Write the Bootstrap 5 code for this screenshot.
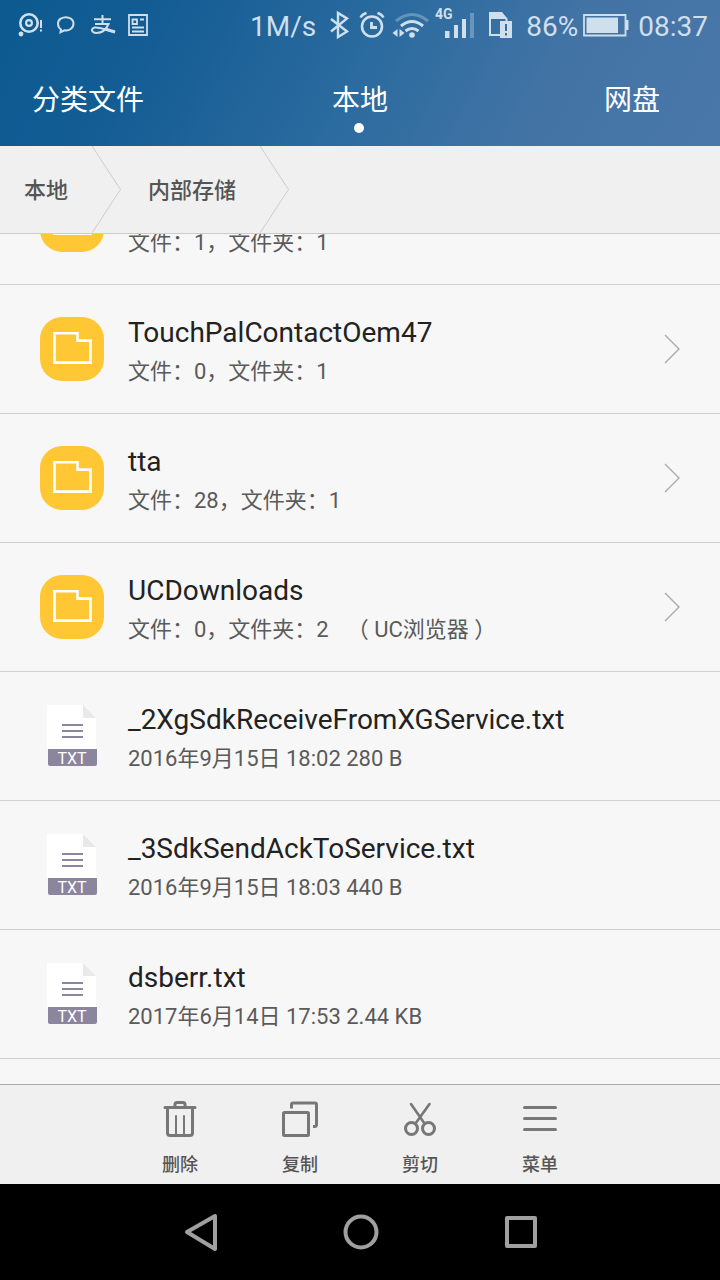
<!DOCTYPE html>
<html lang="zh-CN">
<head>
<meta charset="utf-8">
<meta name="viewport" content="width=device-width, initial-scale=1">
<title>文件管理</title>
<link href="https://cdn.jsdelivr.net/npm/bootstrap@5.3.0/dist/css/bootstrap.min.css" rel="stylesheet">
<style>
  body { font-family: Roboto, "Noto Sans CJK SC", sans-serif; background: #f7f7f7; color: #222; }
  svg { display: block; flex: none; }
  a, button { color: inherit; text-decoration: none; }

  .top-area { background: linear-gradient(118deg, #0c5a90 0%, #135c94 20%, #2b6b9f 50%, #4273a5 74%, #4a77a9 100%); color: #fff; }
  .status-bar { height: 50px; padding: 0 12px 0 14px; font-size: 28px; line-height: 54px; color: #cfdfec; }
  .status-bar svg { height: 50px; fill: none; stroke: #cfdfec; stroke-width: 2; }
  .status-bar .solid { fill: #cfdfec; stroke: none; }
  .status-bar .faint { opacity: .35; }

  .tabs { height: 96px; font-size: 28px; line-height: 44px; }
  .tabs a { padding: 6px 32px 0; position: relative; }
  .tabs .to-right { padding-right: 60px; }
  .tabs .current::after { content: ""; position: absolute; left: 50%; top: 50px; width: 10px; height: 10px; margin-left: -6px; border-radius: 50%; background: #fff; }

  .crumbs { height: 88px; padding-left: 24px; background: #f0f0f0; border-bottom: 1px solid #ccc; font-size: 22px; font-weight: 500; color: #555; }
  .crumbs a { padding-top: 2px; }
  .crumbs svg { margin: 0 27px 0 24px; fill: none; stroke: #ccc; }

  .file-list { min-height: 0; padding-bottom: 25px; scrollbar-width: none; }
  .file-list::-webkit-scrollbar { display: none; }
  .file-row { height: 129px; padding: 0 40px; gap: 24px; border-bottom: 1px solid #d0d0d0; }
  .file-icon { width: 64px; height: 64px; }
  .folder { border-radius: 22px; background: #ffc734; }
  .file-text { padding-top: 6px; }
  .file-name { font-size: 28px; line-height: 40px; color: #222; }
  .file-meta { font-size: 22px; line-height: 38px; color: #5a5a5a; }
  .app-note { margin-left: 18px; }

  .tool-bar { height: 100px; background: #f0f0f0; border-top: 1px solid #aaa; }
  .tool-bar button { width: 120px; padding: 5px 0 0; border: 0; background: none; font-size: 18px; line-height: 20px; font-weight: 500; color: #555; gap: 16px; }
  .tool-bar svg { fill: none; stroke: #777; stroke-width: 3; stroke-linecap: round; stroke-linejoin: round; }

  .nav-keys { height: 96px; background: #000; }
  .nav-keys button { width: 160px; padding: 0; border: 0; background: none; }
  .nav-keys svg { fill: none; stroke: #a0a0a0; stroke-width: 4; stroke-linejoin: round; }
</style>
</head>
<body>
<svg width="0" height="0" class="position-absolute" aria-hidden="true">
  <symbol id="folder" viewBox="0 0 64 64">
    <path d="M14.500 16.300h23v7.300h13v22h-36z" fill="none" stroke="#fff" stroke-width="2.600"/>
  </symbol>
  <symbol id="page" viewBox="0 0 50 62">
    <path d="M0 0h36l13 13v31H0z" fill="#fff"/>
    <path d="M36 0l13 13H36z" fill="#e9e9e9"/>
    <path d="M15 20h21M15 26h21M15 32h21" stroke="#8c859e" stroke-width="2"/>
    <path d="M1 44h49v15q0 2-2 2H3q-2 0-2-2z" fill="#8c859e"/>
  </symbol>
  <symbol id="arrow" viewBox="0 0 16 30">
    <path d="M1 1l14 14L1 29" fill="none" stroke="#aaa" stroke-width="1.400"/>
  </symbol>
</svg>

<div class="d-flex flex-column vh-100 overflow-hidden">
  <header class="top-area flex-shrink-0">
    <div class="status-bar d-flex">
      <svg width="34" viewBox="14 0 34 50"><circle cx="29" cy="23" r="8.700" stroke-width="2.600"/><circle cx="29" cy="23" r="2.900" stroke-width="2.200"/><circle class="solid" cx="21" cy="34" r="2.400"/><path d="M41 20v8M41 29.500v2"/></svg>
      <svg width="36" viewBox="48 0 36 50"><path d="M61 29.500C57 27 57 20.500 61 18.500C66 15.500 73.500 18 73.500 23.500C73.500 28.500 69 31 64.500 30.300L60.500 32.200z"/></svg>
      <svg width="36" viewBox="84 0 36 50"><path d="M94 19.200h17M102.500 15v9M95 24h13.500C106 30 101 33 96.500 33C91 33 90.500 28 95 27.500C100 27 106 30 115 32"/><path d="M105 29l10 3" stroke-width="3"/></svg>
      <svg width="36" viewBox="120 0 36 50"><path d="M129 15h18v20h-18zM132.500 19.500h4.500v4.500h-4.500zM140 19.500h4M132 27.500h12M132 31.500h12" stroke-width="1.800"/></svg>
      <span class="ms-auto">1M/s</span>
      <svg width="38" viewBox="316 0 38 50"><path d="M331 19l16 12.500l-9 5.500V13l9 5.500L331 31.500" stroke-width="2.400"/></svg>
      <svg width="34" viewBox="354 0 34 50"><circle cx="372" cy="26.500" r="10" stroke-width="2.600"/><path d="M371.500 22v5.500h5.500" stroke-width="2.800"/><path d="M360.500 17.500q2-3.500 6-4.500M383.500 17.500q-2-3.500-6-4.500" stroke-width="2.400"/></svg>
      <svg width="44" viewBox="388 0 44 50"><path class="faint" d="M396 21q16-13 32 0" stroke-width="3"/><path d="M401 26q11-9 22 0M405.500 31q6.500-5 13 0" stroke-width="3"/><circle class="solid" cx="412" cy="35" r="2.800"/><path class="solid" d="M397.500 29v8l-5-4zM399.500 29v8l5-4z"/></svg>
      <svg width="48" viewBox="432 0 48 50"><text class="solid" x="435" y="19" font-size="14" font-weight="700">4G</text><path class="solid" d="M445 31h4.500v7H445zM454 25h4v13h-4zM462 19h4v19h-4z"/><path class="solid faint" d="M470 13h4v25h-4z"/></svg>
      <svg width="46" viewBox="480 0 46 50"><path d="M490 35V13h11l5.500 6v16z"/><path class="solid" d="M489 12h13l5 7h-18z"/><path class="solid" d="M500 21h12v17h-12z"/><path d="M506 24v7M506 33v2.500" stroke="#3a70a3"/></svg>
      <span>86%</span>
      <svg width="60" viewBox="578 0 60 50"><path d="M584 15h41.500v20.500H584z" stroke-width="1.800"/><path class="solid" d="M586.500 17.500H618v15.500h-31.500zM626 20h2.500v10H626z"/></svg>
      <span>08:37</span>
    </div>
    <nav class="tabs row g-0 align-items-center">
      <a href="#" class="col-4">分类文件</a>
      <a href="#" class="col-4 text-center current" aria-current="page">本地</a>
      <a href="#" class="col-4 text-end to-right">网盘</a>
    </nav>
  </header>

  <nav class="crumbs d-flex align-items-center flex-shrink-0" aria-label="路径">
    <a href="#">本地</a>
    <svg width="29" height="87" viewBox="0 0 29 87"><path d="M0 0l28.500 43.500L0 87"/></svg>
    <a href="#">内部存储</a>
    <svg width="29" height="87" viewBox="0 0 29 87"><path d="M0 0l28.500 43.500L0 87"/></svg>
  </nav>

  <main class="file-list flex-grow-1 overflow-auto" id="files">
    <a href="#" class="file-row d-flex align-items-center">
      <svg class="file-icon folder"><use href="#folder"/></svg>
      <div class="file-text flex-grow-1"><div class="file-name">&nbsp;</div><div class="file-meta">文件：1，文件夹：1</div></div>
    </a>
    <a href="#" class="file-row d-flex align-items-center">
      <svg class="file-icon folder"><use href="#folder"/></svg>
      <div class="file-text flex-grow-1"><div class="file-name">TouchPalContactOem47</div><div class="file-meta">文件：0，文件夹：1</div></div>
      <svg width="16" height="30"><use href="#arrow"/></svg>
    </a>
    <a href="#" class="file-row d-flex align-items-center">
      <svg class="file-icon folder"><use href="#folder"/></svg>
      <div class="file-text flex-grow-1"><div class="file-name">tta</div><div class="file-meta">文件：28，文件夹：1</div></div>
      <svg width="16" height="30"><use href="#arrow"/></svg>
    </a>
    <a href="#" class="file-row d-flex align-items-center">
      <svg class="file-icon folder"><use href="#folder"/></svg>
      <div class="file-text flex-grow-1"><div class="file-name">UCDownloads</div><div class="file-meta">文件：0，文件夹：2<span class="app-note">（ UC浏览器 ）</span></div></div>
      <svg width="16" height="30"><use href="#arrow"/></svg>
    </a>
    <a href="#" class="file-row d-flex align-items-center">
      <svg class="file-icon" viewBox="-7 -1 64 64"><use href="#page" width="50" height="62"/><text x="25" y="59" font-size="16" fill="#fff" text-anchor="middle">TXT</text></svg>
      <div class="file-text flex-grow-1"><div class="file-name">_2XgSdkReceiveFromXGService.txt</div><div class="file-meta">2016年9月15日 18:02 280 B</div></div>
    </a>
    <a href="#" class="file-row d-flex align-items-center">
      <svg class="file-icon" viewBox="-7 -1 64 64"><use href="#page" width="50" height="62"/><text x="25" y="59" font-size="16" fill="#fff" text-anchor="middle">TXT</text></svg>
      <div class="file-text flex-grow-1"><div class="file-name">_3SdkSendAckToService.txt</div><div class="file-meta">2016年9月15日 18:03 440 B</div></div>
    </a>
    <a href="#" class="file-row d-flex align-items-center">
      <svg class="file-icon" viewBox="-7 -1 64 64"><use href="#page" width="50" height="62"/><text x="25" y="59" font-size="16" fill="#fff" text-anchor="middle">TXT</text></svg>
      <div class="file-text flex-grow-1"><div class="file-name">dsberr.txt</div><div class="file-meta">2017年6月14日 17:53 2.44 KB</div></div>
    </a>
  </main>

  <div class="tool-bar d-flex justify-content-center flex-shrink-0">
    <button type="button" class="d-flex flex-column align-items-center justify-content-center">
      <svg width="40" height="40"><path d="M5 8.500h30M7.500 9v25q0 2.500 2.500 2.500h20q2.500 0 2.500-2.500V9M15 8V5.500q0-2 2-2h6q2 0 2 2V8"/><path d="M16 17v19M24 17v19" stroke-width="2"/></svg>
      <span>删除</span>
    </button>
    <button type="button" class="d-flex flex-column align-items-center justify-content-center">
      <svg width="40" height="40"><rect x="3.500" y="13.500" width="25" height="23" rx="1"/><path d="M11.500 9.500V5.500q0-1.500 1.500-1.500h22q1.500 0 1.500 1.500v20q0 2-2 2h-1.500" stroke-linecap="butt"/></svg>
      <span>复制</span>
    </button>
    <button type="button" class="d-flex flex-column align-items-center justify-content-center">
      <svg width="40" height="40"><circle cx="11.500" cy="29.500" r="6"/><circle cx="28.500" cy="29.500" r="6"/><path d="M11 5l13.500 19.500M29.500 5L15.500 24.500" stroke-width="2.600"/></svg>
      <span>剪切</span>
    </button>
    <button type="button" class="d-flex flex-column align-items-center justify-content-center">
      <svg width="40" height="40"><path d="M4.500 8.500h31M4.500 19.500h31M4.500 30.500h31"/></svg>
      <span>菜单</span>
    </button>
  </div>

  <div class="nav-keys d-flex justify-content-center flex-shrink-0">
    <button type="button" class="d-flex align-items-center justify-content-center" aria-label="返回"><svg width="40" height="40"><path d="M7 20L35 4v33z"/></svg></button>
    <button type="button" class="d-flex align-items-center justify-content-center" aria-label="主页"><svg width="40" height="40"><circle cx="21" cy="20" r="15.500"/></svg></button>
    <button type="button" class="d-flex align-items-center justify-content-center" aria-label="最近任务"><svg width="40" height="40"><path d="M7 6h28v28H7z"/></svg></button>
  </div>
</div>
<script src="https://cdn.jsdelivr.net/npm/bootstrap@5.3.0/dist/js/bootstrap.bundle.min.js"></script>
<script>
  // open at the end of the list
  const files = document.getElementById('files');
  files.scrollTop = files.scrollHeight;
</script>
</body>
</html>
